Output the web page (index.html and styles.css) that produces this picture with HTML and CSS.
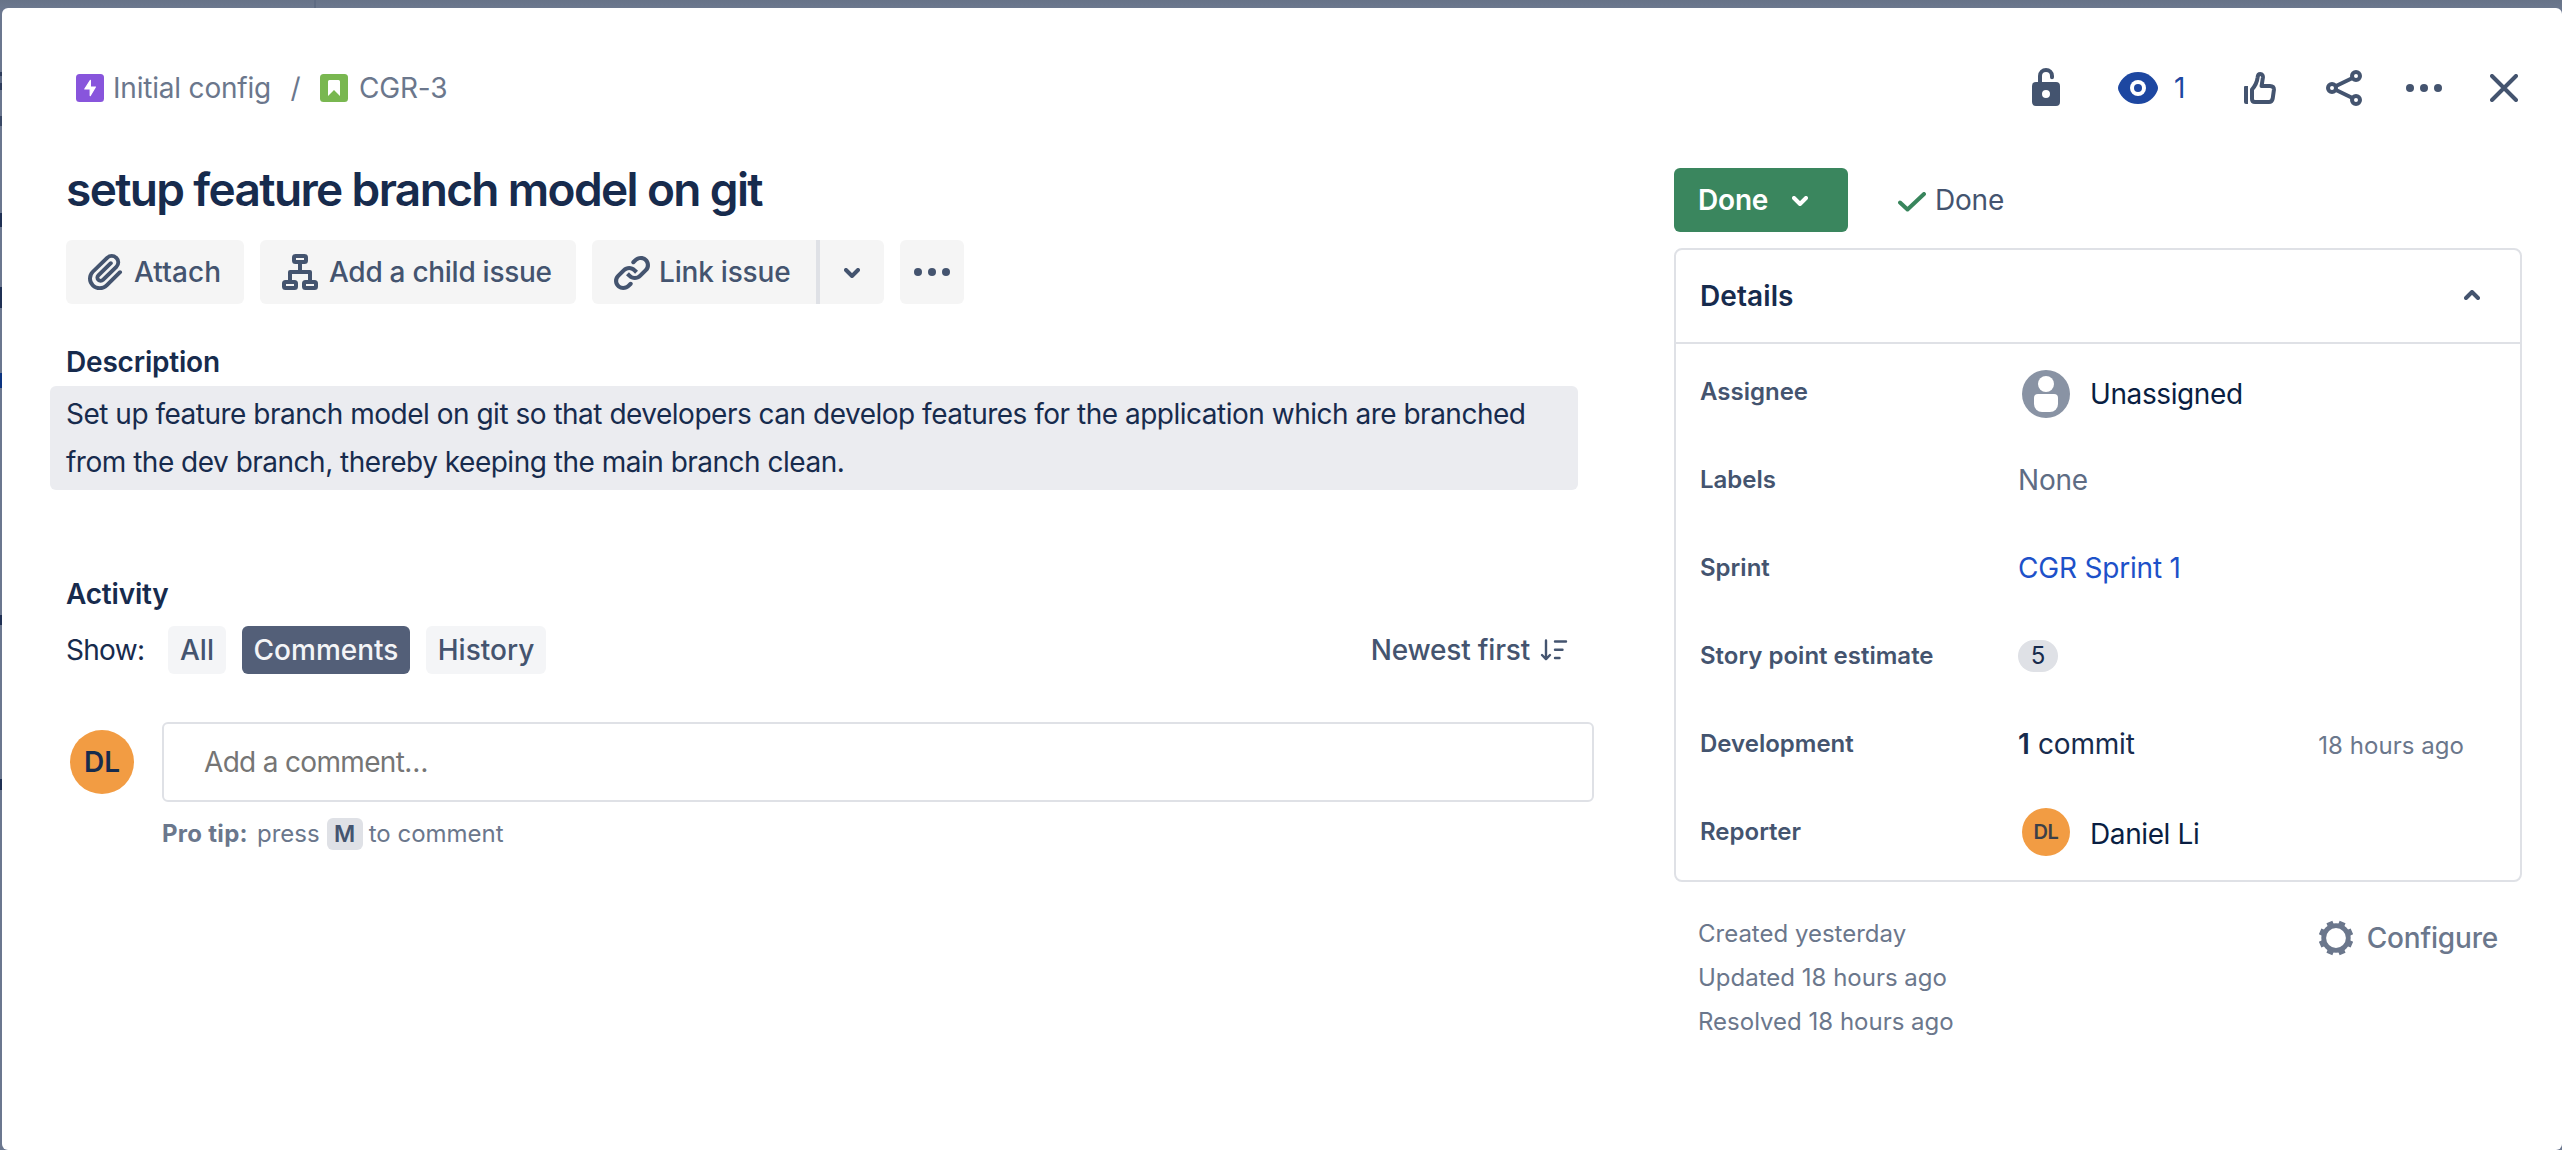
FILE: index.html
```html
<!DOCTYPE html>
<html lang="en">
<head>
<meta charset="utf-8">
<title>CGR-3 setup feature branch model on git</title>
<link rel="stylesheet" href="styles.css">
</head>
<body>
<main class="modal">
  <header class="topbar">
    <nav class="crumbs">
      <svg width="28" height="28" viewBox="0 0 28 28"><rect width="28" height="28" rx="3.500" fill="#8855dc"/><path d="M14.400 6.400L8.800 15h5.400v6.600L19.400 13H14.400z" fill="#fff" stroke="#fff" stroke-width="1.200" stroke-linejoin="round"/></svg>
      <span class="crumb-epic">Initial config</span>
      <span class="crumb-sep">/</span>
      <svg width="28" height="28" viewBox="0 0 28 28"><rect width="28" height="28" rx="3.500" fill="#79b750"/><path d="M8 22V7.500Q8 6 9.500 6h9q1.500 0 1.500 1.500V22l-6-6z" fill="#fff"/></svg>
      <span class="crumb-key">CGR-3</span>
    </nav>
    <div class="tools">
      <svg class="tool-lock" width="28" height="38" viewBox="0 0 28 38"><path d="M8 16V8a6 6 0 0 1 12 0v1.200" fill="none" stroke="currentColor" stroke-width="4" stroke-linecap="round"/><path fill="currentColor" fill-rule="evenodd" d="M4 14h20a4 4 0 0 1 4 4v16a4 4 0 0 1-4 4H4a4 4 0 0 1-4-4V18a4 4 0 0 1 4-4zm10 8a4 4 0 1 0 0 8 4 4 0 0 0 0-8z"/></svg>
      <svg class="tool-watch" width="40" height="32" viewBox="0 0 40 32"><path fill="currentColor" d="M20 0c10 0 16.500 6 19.500 13.500q1 2.500 0 5C36.500 26 30 32 20 32S3.500 26 .5 18.500q-1-2.500 0-5C3.500 6 10 0 20 0z"/><circle cx="20" cy="16" r="8" fill="#fff"/><circle cx="20" cy="16" r="4" fill="currentColor"/></svg>
      <span class="watch-count">1</span>
      <svg width="32" height="32" viewBox="0 0 32 32"><path fill="currentColor" d="M1 14h3v18H2a2 2 0 0 1-2-2V15a1 1 0 0 1 1-1z"/><path d="M8 17.500C11.500 13.500 13 11 13.600 5.500 13.800 3 14.800 2 16.300 2c2 0 2.800 1.600 2.600 3.500L17.600 14H26q4.200 0 3.900 4l-1.200 8.500Q28 30 25 30H11q-3 0-3-3z" fill="none" stroke="currentColor" stroke-width="4" stroke-linejoin="round"/></svg>
      <svg class="tool-share" width="36" height="36" viewBox="0 0 36 36" fill="none" stroke="currentColor" stroke-width="4"><circle cx="6" cy="18" r="4"/><circle cx="30" cy="6" r="4"/><circle cx="30" cy="30" r="4"/><path d="M9.500 16.200L26.500 8M9.500 19.800L26.500 28"/></svg>
      <svg class="tool-more" width="36" height="8" viewBox="0 0 36 8" fill="currentColor"><circle cx="4" cy="4" r="4"/><circle cx="18" cy="4" r="4"/><circle cx="32" cy="4" r="4"/></svg>
      <svg class="tool-close" width="28" height="28" viewBox="0 0 28 28" fill="none" stroke="currentColor" stroke-width="4" stroke-linecap="round"><path d="M2 2l24 24M26 2L2 26"/></svg>
    </div>
  </header>

  <div class="columns">
    <section class="content">
      <h1>setup feature branch model on git</h1>
      <div class="actions">
        <button class="btn btn-attach"><svg width="48" height="48" viewBox="0 0 24 24"><path fill="currentColor" d="M11.643 17.965c-1.530 1.495-4.016 1.496-5.542.004a3.773 3.773 0 01.002-5.412l7.147-6.985a2.316 2.316 0 013.233-.003c.893.873.895 2.282.004 3.153l-6.703 6.550a.653.653 0 01-.914-.008.620.620 0 010-.902l6.229-6.087a.941.941 0 000-1.353.995.995 0 00-1.384 0l-6.230 6.087a2.502 2.502 0 000 3.607 2.643 2.643 0 003.683.009l6.703-6.550a4.074 4.074 0 00-.003-5.859 4.306 4.306 0 00-6.002.003l-7.148 6.985a5.655 5.655 0 00-.001 8.118c2.290 2.239 6.015 2.238 8.310-.005l6.686-6.533a.941.941 0 000-1.353.995.995 0 00-1.384 0l-6.686 6.534z"/></svg>Attach</button>
        <button class="btn btn-child"><svg width="36" height="36" viewBox="0 0 36 36" fill="none" stroke="currentColor" stroke-width="4"><rect x="12" y="2" width="12" height="6" rx="1.500"/><rect x="2" y="28" width="12" height="6" rx="1.500"/><rect x="22" y="28" width="12" height="6" rx="1.500"/><path d="M18 9v9M8 27v-9h20v9" stroke-linejoin="round"/></svg>Add a child issue</button>
        <div class="split">
          <button class="btn btn-link"><svg width="48" height="48" viewBox="0 0 24 24" fill="currentColor"><path d="M12.856 5.457l-.937.920a1.002 1.002 0 000 1.437 1.047 1.047 0 001.463 0l.984-.966c.967-.950 2.542-1.135 3.602-.288a2.540 2.540 0 01.203 3.810l-2.903 2.852a2.646 2.646 0 01-3.696 0l-1.110-1.090L9 13.570l1.108 1.089c1.822 1.788 4.802 1.788 6.622 0l2.905-2.852a4.558 4.558 0 00-.357-6.820c-1.893-1.517-4.695-1.226-6.422.470"/><path d="M11.144 19.543l.937-.920a1.002 1.002 0 000-1.437 1.047 1.047 0 00-1.462 0l-.985.966c-.967.950-2.542 1.135-3.602.288a2.540 2.540 0 01-.203-3.810l2.903-2.852a2.646 2.646 0 013.696 0l1.110 1.090L15 11.430l-1.108-1.089c-1.822-1.788-4.802-1.788-6.622 0l-2.905 2.852a4.558 4.558 0 00.357 6.820c1.893 1.517 4.695 1.226 6.422-.470"/></svg>Link issue</button>
          <button class="btn btn-chevron"><svg width="16" height="10" viewBox="0 0 16 10" fill="none" stroke="currentColor" stroke-width="4" stroke-linecap="round" stroke-linejoin="round"><path d="M2 2l6 6 6-6"/></svg></button>
        </div>
        <button class="btn btn-more"><svg width="36" height="8" viewBox="0 0 36 8" fill="currentColor"><circle cx="4" cy="4" r="4"/><circle cx="18" cy="4" r="4"/><circle cx="32" cy="4" r="4"/></svg></button>
      </div>

      <h2 class="desc-title">Description</h2>
      <div class="desc">Set up feature branch model on git so that developers can develop features for the application which are branched<br>from the dev branch, thereby keeping the main branch clean.</div>

      <h2 class="act-title">Activity</h2>
      <div class="filters">
        <span class="show">Show:</span>
        <button class="chip chip-all">All</button>
        <button class="chip chip-comments">Comments</button>
        <button class="chip chip-history">History</button>
        <div class="sort">Newest first
          <svg width="28" height="22" viewBox="0 0 28 22" fill="none" stroke="currentColor" stroke-width="2.400" stroke-linecap="round" stroke-linejoin="round"><path d="M6 1.500V20M2 16l4 4.200 4-4.200"/><path d="M15 2.500h11M15 10.800h7.500M15 19h4.500"/></svg>
        </div>
      </div>

      <div class="comment">
        <div class="avatar avatar-lg">DL</div>
        <div class="comment-box">Add a comment…</div>
      </div>
      <p class="tip"><b>Pro tip:</b><span>press</span><kbd>M</kbd><span>to comment</span></p>
    </section>

    <aside class="side">
      <div class="status">
        <button class="status-btn">Done<svg width="16" height="10" viewBox="0 0 16 10" fill="none" stroke="currentColor" stroke-width="4" stroke-linecap="round" stroke-linejoin="round"><path d="M2 2l6 6 6-6"/></svg></button>
        <svg class="check" width="28" height="20" viewBox="0 0 28 20" fill="none" stroke="#38855c" stroke-width="4" stroke-linecap="round" stroke-linejoin="round"><path d="M2 10.500l7.500 7L26 2"/></svg>
        <span>Done</span>
      </div>
      <div class="panel">
        <div class="panel-head"><span>Details</span><svg width="16" height="10" viewBox="0 0 16 10" fill="none" stroke="currentColor" stroke-width="4" stroke-linecap="round" stroke-linejoin="round"><path d="M2 8l6-6 6 6"/></svg></div>
        <dl class="fields">
          <div class="row"><dt>Assignee</dt><dd class="person"><svg width="48" height="48" viewBox="0 0 48 48"><circle cx="24" cy="24" r="24" fill="#8993a4"/><circle cx="24" cy="14" r="8" fill="#fff"/><path d="M16 24h16a4 4 0 0 1 4 4v6a8 8 0 0 1-8 8h-8a8 8 0 0 1-8-8v-6a4 4 0 0 1 4-4z" fill="#fff"/></svg><span>Unassigned</span></dd></div>
          <div class="row"><dt>Labels</dt><dd class="none">None</dd></div>
          <div class="row"><dt>Sprint</dt><dd class="link">CGR Sprint 1</dd></div>
          <div class="row"><dt>Story point estimate</dt><dd><span class="badge">5</span></dd></div>
          <div class="row"><dt>Development</dt><dd><span class="count">1</span>commit<time>18 hours ago</time></dd></div>
          <div class="row"><dt>Reporter</dt><dd class="person"><div class="avatar avatar-sm">DL</div><span>Daniel Li</span></dd></div>
        </dl>
      </div>
      <footer class="meta">
        <div class="dates"><div>Created yesterday</div><div>Updated 18 hours ago</div><div>Resolved 18 hours ago</div></div>
        <div class="configure">
          <svg width="36" height="36" viewBox="-18 -18 36 36" fill="none" stroke="currentColor"><circle r="12.300" stroke-width="4.800"/><path stroke-width="6.400" d="M4.780-11.550L6.600-15.900M-4.780-11.550L-6.600-15.900M4.780 11.550L6.600 15.900M-4.780 11.550L-6.600 15.900M11.550-4.780L15.900-6.600M-11.550-4.780L-15.900-6.600M11.550 4.780L15.900 6.600M-11.550 4.780L-15.900 6.600"/></svg>
          Configure
        </div>
      </footer>
    </aside>
  </div>
</main>
</body>
</html>
```
FILE: styles.css
```css
* { box-sizing: border-box; }

body {
  margin: 0;
  width: 2562px;
  height: 1150px;
  overflow: hidden;
  padding: 8px 0 0 2px;
  font-family: Inter, "Liberation Sans", sans-serif;
  font-size: 28px;
  letter-spacing: -0.007em;
  color: #172b4d;
  /* slivers of the dimmed board that stay visible around the dialog */
  background:
    linear-gradient(#5f6c83, #5f6c83) 314px 0 / 2px 8px no-repeat,
    linear-gradient(#677388 0, #6c788e 8px) 0 0 / 100% 8px no-repeat,
    linear-gradient(#6b778f 0 72px, #2e3d5c 72px 76px, #5b6883 76px 83px, #2e3d5c 83px 90px, #6b778f 90px 116px, #3a4966 116px 126px, #6b778f 126px 213px, #1f3054 213px 227px, #6b778f 227px 287px, #1f3054 287px 308px, #6b778f 308px 373px, #0b3380 373px 388px, #6b778f 388px 615px, #1f3054 615px 625px, #6b778f 625px 779px, #1f3054 779px 790px, #6b778f 790px) 0 0 / 2px 100% no-repeat,
    #6b778f;
}

h1, h2, p, dl, dd { margin: 0; }

button {
  font: inherit;
  letter-spacing: inherit;
  border: 0;
  padding: 0;
  margin: 0;
  color: inherit;
}

svg { display: block; flex: none; }

.modal {
  height: 1142px;
  background: #fff;
  border-radius: 6px;
}

/* top bar */
.topbar {
  display: flex;
  align-items: center;
  justify-content: space-between;
  height: 152px;
  padding: 48px 44px 40px 74px;
}

.crumbs { display: flex; align-items: center; line-height: 40px; color: #6b778c; }
.crumb-epic { width: 158px; margin-left: 9px; white-space: nowrap; }
.crumb-sep { width: 49px; text-align: center; }
.crumb-key { margin-left: 11px; }

.tools { display: flex; align-items: center; color: #44546f; }
.tool-lock { margin-top: -2px; }
.tool-watch { margin-left: 58px; color: #1d47a1; }
.watch-count { width: 86px; padding-left: 16px; color: #1d47a1; }
.tool-share { margin-left: 50px; }
.tool-more { margin-left: 44px; }
.tool-close { margin-left: 48px; }

.columns {
  display: flex;
  justify-content: space-between;
  padding: 0 40px 0 64px;
}

/* left column */
.content { width: 1528px; }

h1 {
  font-size: 46px;
  font-weight: 600;
  line-height: 58px;
  letter-spacing: -0.0355em;
  white-space: nowrap;
}

.actions { display: flex; gap: 16px; margin-top: 22px; }

.btn {
  display: flex;
  align-items: center;
  height: 64px;
  border-radius: 6px;
  background: #f5f5f5;
  color: #44546f;
  font-weight: 500;
  white-space: nowrap;
}

.btn-attach { width: 178px; padding-left: 16px; gap: 4px; letter-spacing: 0.003em; }
.btn-child { width: 316px; padding-left: 22px; gap: 11px; letter-spacing: -0.01em; }
.split { display: flex; }
.btn-link {
  width: 228px;
  padding-left: 16px;
  gap: 3px;
  border-right: 4px solid #dfe1e6;
  border-radius: 6px 0 0 6px;
}
.btn-chevron { width: 64px; justify-content: center; border-radius: 0 6px 6px 0; }
.btn-chevron svg { margin-top: 2px; }
.btn-more { width: 64px; justify-content: center; }

h2 { font-size: 28px; font-weight: 600; line-height: 40px; letter-spacing: -0.007em; }
.desc-title { margin-top: 38px; }

.desc {
  margin: 4px 16px 0 -16px;
  padding: 4px 16px;
  line-height: 48px;
  letter-spacing: -0.0177em;
  white-space: nowrap;
  background: #ebecf0;
  border-radius: 6px;
}

.act-title { margin-top: 84px; }

.filters { display: flex; align-items: center; height: 48px; margin-top: 12px; }
.show { width: 102px; letter-spacing: -0.025em; }

.chip {
  height: 48px;
  margin-right: 16px;
  border-radius: 6px;
  background: #f4f5f7;
  color: #44546f;
  font-weight: 500;
  letter-spacing: 0;
}
.chip-all { width: 58px; }
.chip-comments { width: 168px; background: #535f78; color: #f4f5f7; }
.chip-history { width: 120px; }

.sort {
  display: flex;
  align-items: center;
  gap: 10px;
  margin-left: auto;
  margin-right: 26px;
  color: #44546f;
  font-weight: 500;
}

.comment { display: flex; align-items: center; margin-top: 48px; padding-left: 4px; }

.avatar {
  display: flex;
  align-items: center;
  justify-content: center;
  border-radius: 50%;
  background: #f29c43;
  color: #172b4d;
  font-weight: 600;
}
.avatar-lg { width: 64px; height: 64px; font-size: 28px; letter-spacing: 0; }
.avatar-sm { width: 48px; height: 48px; margin-top: -4px; font-size: 20px; color: #3c4048; }

.comment-box {
  flex: 1;
  height: 80px;
  margin-left: 28px;
  padding-left: 40px;
  line-height: 76px;
  border: 2px solid #dfe1e6;
  border-radius: 6px;
  color: #757575;
  letter-spacing: -0.024em;
}

.tip {
  display: flex;
  align-items: center;
  height: 32px;
  margin-top: 16px;
  padding-left: 96px;
  font-size: 24px;
  line-height: 30px;
  letter-spacing: 0;
  color: #6b778c;
}
.tip b, .tip span { padding-bottom: 1px; }
.tip b { width: 95px; font-weight: 700; letter-spacing: 0.012em; }
.tip kbd {
  width: 36px;
  height: 32px;
  margin: 0 6px 0 7px;
  border-radius: 6px;
  background: #dfe1e6;
  color: #44546f;
  font: 600 23px/32px Inter, sans-serif;
  text-align: center;
}

/* right column */
.side { width: 848px; padding-top: 8px; }

.status { display: flex; align-items: center; height: 64px; color: #44546f; }
.status-btn {
  display: flex;
  align-items: center;
  width: 174px;
  height: 64px;
  padding-left: 24px;
  border-radius: 6px;
  background: #3a865e;
  color: #fff;
  font-weight: 600;
}
.status-btn svg { margin: 2px 0 0 24px; }
.check { margin: 4px 9px 0 50px; }

.panel {
  height: 634px;
  margin-top: 16px;
  border: 2px solid #dfe1e6;
  border-radius: 8px;
}

.panel-head {
  display: flex;
  align-items: center;
  justify-content: space-between;
  height: 94px;
  padding: 0 40px 0 24px;
  border-bottom: 2px solid #dfe1e6;
  font-weight: 600;
  letter-spacing: 0.003em;
}
.panel-head svg { color: #44546f; margin-top: -2px; }

.fields { padding: 6px 56px 0 24px; }
.row { display: flex; align-items: center; height: 88px; }

dt {
  width: 318px;
  padding-bottom: 5px;
  font-size: 24px;
  font-weight: 600;
  letter-spacing: 0;
  color: #44546f;
}

dd { display: flex; flex: 1; align-items: center; padding-bottom: 4px; }
.person { padding: 0 0 0 4px; color: #091e42; letter-spacing: -0.014em; }
.person span { margin-left: 20px; }
.none { color: #5e6c84; }
.link { color: #1d51c9; }

.badge {
  width: 40px;
  height: 32px;
  border-radius: 16px;
  background: #dfe1e6;
  font-size: 24px;
  line-height: 32px;
  text-align: center;
}
.count { width: 20px; font-weight: 600; }
time { margin: 2px 0 0 auto; font-size: 24px; letter-spacing: 0.002em; color: #6b778c; }

.meta { display: flex; justify-content: space-between; padding: 30px 24px 0 24px; color: #6b778c; }
.dates { font-size: 24px; line-height: 44px; letter-spacing: 0; }
.configure {
  display: flex;
  align-items: center;
  gap: 13px;
  height: 40px;
  margin-top: 6px;
  font-weight: 500;
}
```
